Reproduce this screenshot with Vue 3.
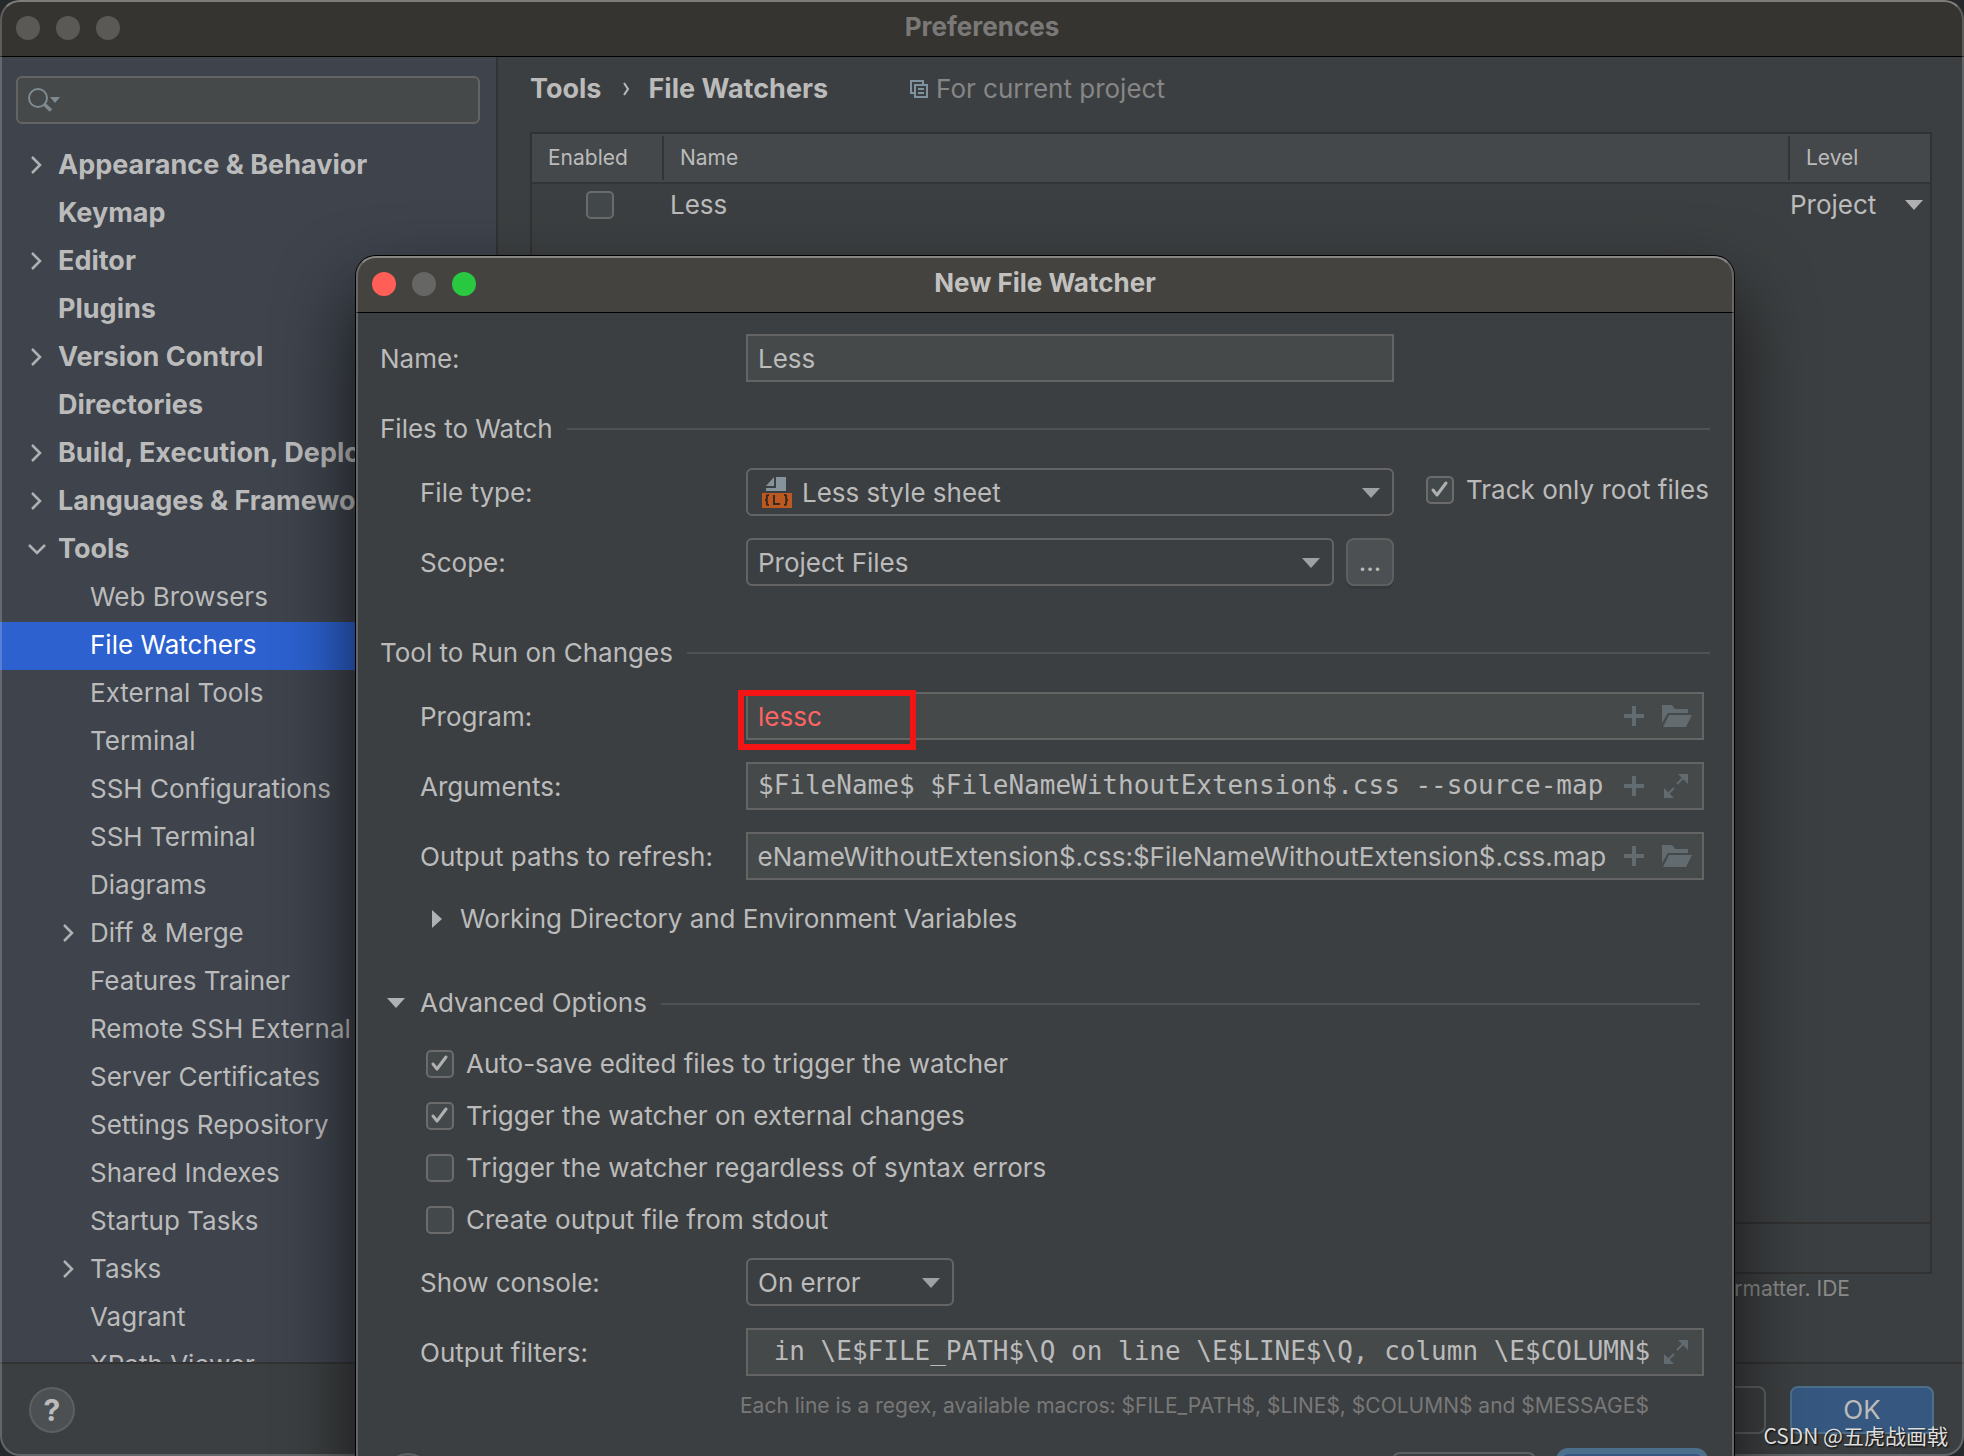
<script setup>
import { ref, onMounted } from 'vue'

const tree = [
  { label: 'Appearance & Behavior', top: true, arrow: 'right' },
  { label: 'Keymap', top: true },
  { label: 'Editor', top: true, arrow: 'right' },
  { label: 'Plugins', top: true },
  { label: 'Version Control', top: true, arrow: 'right' },
  { label: 'Directories', top: true },
  { label: 'Build, Execution, Deployment', top: true, arrow: 'right' },
  { label: 'Languages & Frameworks', top: true, arrow: 'right' },
  { label: 'Tools', top: true, arrow: 'down' },
  { label: 'Web Browsers' },
  { label: 'File Watchers', selected: true },
  { label: 'External Tools' },
  { label: 'Terminal' },
  { label: 'SSH Configurations' },
  { label: 'SSH Terminal' },
  { label: 'Diagrams' },
  { label: 'Diff & Merge', arrow: 'right' },
  { label: 'Features Trainer' },
  { label: 'Remote SSH External Tools' },
  { label: 'Server Certificates' },
  { label: 'Settings Repository' },
  { label: 'Shared Indexes' },
  { label: 'Startup Tasks' },
  { label: 'Tasks', arrow: 'right' },
  { label: 'Vagrant' },
  { label: 'XPath Viewer' },
]

const options = ref([
  { label: 'Auto-save edited files to trigger the watcher', on: true },
  { label: 'Trigger the watcher on external changes', on: true },
  { label: 'Trigger the watcher regardless of syntax errors', on: false },
  { label: 'Create output file from stdout', on: false },
])

const enabled = ref(false)
const trackRoot = ref(true)
const watcherName = ref('Less')
const program = ref('lessc')
const args = ref('$FileName$ $FileNameWithoutExtension$.css --source-map')
const outputPaths = ref('$FileNameWithoutExtension$.css:$FileNameWithoutExtension$.css.map')
const filters = ref(' in \\E$FILE_PATH$\\Q on line \\E$LINE$\\Q, column \\E$COLUMN$')

const pathsInput = ref(null)
onMounted(() => {
  // keep the end of the long path list in view
  pathsInput.value.scrollLeft = pathsInput.value.scrollWidth
})
</script>

<template>
  <div class="desktop">
    <div class="window">
      <header class="titlebar">
        <div class="lights"><i></i><i></i><i></i></div>
        <h1>Preferences</h1>
      </header>

      <div class="content">
        <aside class="sidebar">
          <label class="search">
            <svg width="36" height="28" viewBox="0 0 36 28" aria-hidden="true">
              <circle cx="12" cy="12" r="9" fill="none" stroke="#7f8b91" stroke-width="2" />
              <path d="M18 18l7 6.500" stroke="#7f8b91" stroke-width="3.500" />
              <path d="M24 11h10l-5 6z" fill="#7f8b91" />
            </svg>
            <input type="text" aria-label="Search settings" />
          </label>
          <ul class="tree">
            <li
              v-for="item in tree"
              :key="item.label"
              :class="{ top: item.top, child: !item.top, selected: item.selected }"
            >
              <span class="twist">
                <svg v-if="item.arrow === 'right'" width="20" height="20" viewBox="0 0 20 20">
                  <path d="M6 2l8 8-8 8" fill="none" stroke="#afb1b3" stroke-width="2.500" />
                </svg>
                <svg v-else-if="item.arrow === 'down'" width="20" height="20" viewBox="0 0 20 20">
                  <path d="M3 6l8 8 8-8" fill="none" stroke="#afb1b3" stroke-width="2.500" />
                </svg>
              </span>
              {{ item.label }}
            </li>
          </ul>
        </aside>

        <main class="page">
          <div class="crumbs">
            <strong>Tools</strong>
            <svg width="8" height="16" viewBox="0 0 8 16"><path d="M2 2l4 6-4 6" fill="none" stroke="#bbb" stroke-width="2" /></svg>
            <strong>File Watchers</strong>
            <span class="scope-note">
              <svg width="18" height="18" viewBox="0 0 18 18" fill="none" stroke="#7f939e" stroke-width="2">
                <path d="M4 13H1V1h12v3" />
                <path d="M5 5h12v12H5zM8 9h6M8 13h6" />
              </svg>
              For current project
            </span>
          </div>

          <div class="table-box">
            <table>
              <thead>
                <tr><th class="c-on"><span>Enabled</span></th><th><span>Name</span></th><th class="c-level"><span>Level</span></th></tr>
              </thead>
              <tbody>
                <tr>
                  <td class="on"><span class="check"><input v-model="enabled" type="checkbox" aria-label="Enable Less" /></span></td>
                  <td class="row-name">Less</td>
                  <td>
                    <span class="level">Project
                      <svg width="18" height="10" viewBox="0 0 18 10"><path d="M0 0h18L9 10z" fill="#afb1b3" /></svg>
                    </span>
                  </td>
                </tr>
              </tbody>
            </table>
            <div class="table-tools"></div>
          </div>
          <p class="page-note">formatter. IDE</p>
        </main>
      </div>

      <footer class="footer">
        <button class="help" type="button">?</button>
        <div class="actions">
          <button class="btn" type="button" aria-label="Cancel"></button>
          <button class="btn primary" type="button">OK</button>
        </div>
      </footer>
    </div>

    <section class="dialog" role="dialog" aria-labelledby="dlg-title">
      <header class="titlebar">
        <div class="lights active"><i></i><i></i><i></i></div>
        <h2 id="dlg-title">New File Watcher</h2>
      </header>

      <form class="form" @submit.prevent>
        <div class="row">
          <label for="f-name">Name:</label>
          <input id="f-name" v-model="watcherName" class="box wide" type="text" />
        </div>

        <div class="section"><span>Files to Watch</span><hr /></div>
        <div class="group">
          <div class="row">
            <label for="f-type">File type:</label>
            <div class="pick wide typed">
              <svg class="type-icon" width="30" height="32" viewBox="0 0 30 32" aria-hidden="true">
                <path d="M12 1v9H4z" fill="#87939a" />
                <path d="M14 1h10v14H4v-3h10z" fill="#87939a" />
                <path d="M0 17h30v15H0z" fill="#bd5821" />
                <path d="M7 19c-3 0-2 1-2 3s-1 2-2 2c1 0 2 0 2 2s-1 3 2 3M22 19c3 0 2 1 2 3s1 2 2 2c-1 0-2 0-2 2s1 3-2 3M12 19v9h6" fill="none" stroke="#3b2a20" stroke-width="2" />
              </svg>
              <select id="f-type"><option>Less style sheet</option></select>
              <svg class="arrow" width="18" height="10" viewBox="0 0 18 10"><path d="M0 0h18L9 10z" fill="#9da1a4" /></svg>
            </div>
            <label class="option track">
              <span class="check">
                <input v-model="trackRoot" type="checkbox" />
                <svg v-if="trackRoot" viewBox="0 0 28 28"><path d="M7 14l4 5 9-12" /></svg>
              </span>
              Track only root files
            </label>
          </div>
          <div class="row">
            <label for="f-scope">Scope:</label>
            <div class="wide split">
              <div class="pick">
                <select id="f-scope"><option>Project Files</option></select>
                <svg class="arrow" width="18" height="10" viewBox="0 0 18 10"><path d="M0 0h18L9 10z" fill="#9da1a4" /></svg>
              </div>
              <button class="more" type="button">...</button>
            </div>
          </div>
        </div>

        <div class="section late"><span>Tool to Run on Changes</span><hr /></div>
        <div class="group">
          <div class="row">
            <label for="f-program">Program:</label>
            <div class="box field">
              <input id="f-program" v-model="program" class="bad" type="text" />
              <svg width="20" height="20" viewBox="0 0 20 20"><path d="M8 0h4v8h8v4h-8v8H8v-8H0V8h8z" fill="#616b70" /></svg>
              <svg width="30" height="22" viewBox="0 0 30 22" fill="#616b70"><path d="M0 0h10l3 4h13v4H6L0 18z" /><path d="M7 10h23l-6 12H1z" /></svg>
              <div class="marker"></div>
            </div>
          </div>
          <div class="row">
            <label for="f-args">Arguments:</label>
            <div class="box field">
              <input id="f-args" v-model="args" class="mono" type="text" />
              <svg width="20" height="20" viewBox="0 0 20 20"><path d="M8 0h4v8h8v4h-8v8H8v-8H0V8h8z" fill="#616b70" /></svg>
              <svg width="30" height="24" viewBox="0 0 30 24" fill="#616b70"><path d="M16 0h10v10zM2 14l10 10H2z" /><path d="M15 10l7-7M6 20l6-6" stroke="#616b70" stroke-width="2" /></svg>
            </div>
          </div>
          <div class="row">
            <label for="f-paths">Output paths to refresh:</label>
            <div class="box field">
              <input id="f-paths" ref="pathsInput" v-model="outputPaths" type="text" />
              <svg width="20" height="20" viewBox="0 0 20 20"><path d="M8 0h4v8h8v4h-8v8H8v-8H0V8h8z" fill="#616b70" /></svg>
              <svg width="30" height="22" viewBox="0 0 30 22" fill="#616b70"><path d="M0 0h10l3 4h13v4H6L0 18z" /><path d="M7 10h23l-6 12H1z" /></svg>
            </div>
          </div>
        </div>

        <button class="fold inner" type="button">
          <svg width="20" height="18" viewBox="0 0 20 18"><path d="M6 0v18l10-9z" fill="#afb1b3" /></svg>
          Working Directory and Environment Variables
        </button>

        <div class="section advanced">
          <button class="fold" type="button">
            <svg width="20" height="18" viewBox="0 0 20 18"><path d="M1 4h18L10 14z" fill="#afb1b3" /></svg>
            Advanced Options
          </button>
          <hr />
        </div>

        <div class="options">
          <label v-for="o in options" :key="o.label" class="option">
            <span class="check">
              <input v-model="o.on" type="checkbox" />
              <svg v-if="o.on" viewBox="0 0 28 28"><path d="M7 14l4 5 9-12" /></svg>
            </span>
            {{ o.label }}
          </label>
        </div>

        <div class="group">
          <div class="row">
            <label for="f-console">Show console:</label>
            <div class="pick small">
              <select id="f-console"><option>On error</option></select>
              <svg class="arrow" width="18" height="10" viewBox="0 0 18 10"><path d="M0 0h18L9 10z" fill="#9da1a4" /></svg>
            </div>
          </div>
          <div class="row">
            <label for="f-filters">Output filters:</label>
            <div class="box field tight">
              <input id="f-filters" v-model="filters" class="mono" type="text" />
              <svg width="30" height="24" viewBox="0 0 30 24" fill="#616b70"><path d="M16 0h10v10zM2 14l10 10H2z" /><path d="M15 10l7-7M6 20l6-6" stroke="#616b70" stroke-width="2" /></svg>
            </div>
          </div>
        </div>
        <p class="hint">Each line is a regex, available macros: $FILE_PATH$, $LINE$, $COLUMN$ and $MESSAGE$</p>

        <div class="dialog-footer">
          <button class="help" type="button" aria-label="Help"></button>
          <div class="actions">
            <button class="btn" type="button" aria-label="Cancel"></button>
            <button class="btn primary focused" type="button" aria-label="OK"></button>
          </div>
        </div>
      </form>
    </section>

    <div class="credit">CSDN @五虎战画戟</div>
  </div>
</template>

<style>
body {
  background: #25292b;
}
</style>

<style scoped>
.desktop,
.desktop * {
  box-sizing: border-box;
}
.desktop {
  position: relative;
  height: 100vh;
  overflow: hidden;
  color: #bbbbbb;
  font: 26px/30px Inter, "Liberation Sans", sans-serif;
  font-optical-sizing: none;
  white-space: nowrap;
}
.desktop button,
.desktop input,
.desktop select {
  margin: 0;
  padding: 0;
  border: 0;
  outline: 0;
  background: none;
  color: inherit;
  font: inherit;
  font-optical-sizing: none;
  appearance: none;
}
svg {
  display: block;
  flex: none;
}

/* window frames */
.window {
  display: flex;
  flex-direction: column;
  height: 100%;
  border-radius: 20px;
  overflow: hidden;
  background: #3c3f41;
}
.window::after,
.dialog::after {
  content: "";
  position: absolute;
  inset: 0;
  border: 2px solid rgba(255, 255, 255, 0.2);
  border-top-color: rgba(255, 255, 255, 0.36);
  border-radius: 20px;
  pointer-events: none;
}
.titlebar {
  flex: none;
  display: grid;
  grid-template-columns: 1fr auto 1fr;
  align-items: center;
  height: 57px;
  padding: 0 16px;
  background: #353431;
  border-bottom: 1px solid #000;
}
.titlebar h1,
.titlebar h2 {
  margin: 0;
  padding-bottom: 2px;
  font-size: 26px;
  font-weight: 700;
  color: #7b7977;
}
.lights {
  display: flex;
  gap: 16px;
}
.lights i {
  width: 24px;
  height: 24px;
  border-radius: 50%;
  background: #5a5956;
}

/* preferences */
.content {
  flex: 1;
  min-height: 0;
  display: flex;
}
.sidebar {
  flex: none;
  display: flex;
  flex-direction: column;
  width: 498px;
  padding-top: 19px;
  background: #3e434c;
  border-right: 2px solid #323232;
  overflow: hidden;
}
.search {
  flex: none;
  display: flex;
  align-items: center;
  gap: 8px;
  height: 48px;
  margin: 0 16px 18px;
  padding-left: 12px;
  background: #45494a;
  border: 2px solid #646464;
  border-radius: 6px;
}
.search svg {
  margin-left: -4px;
}
.search input {
  flex: 1;
  min-width: 0;
}
.tree {
  margin: 0;
  padding: 0;
  list-style: none;
}
.tree li {
  display: flex;
  align-items: center;
  height: 48px;
  padding: 0 0 2px 26px;
}
.tree .top {
  font-size: 27px;
  font-weight: 700;
}
.tree .child {
  padding-left: 58px;
}
.tree .selected {
  background: #2c61cf;
  color: #fff;
}
.twist {
  flex: none;
  width: 32px;
}
.page {
  flex: 1;
  min-width: 0;
  display: flex;
  flex-direction: column;
  padding: 17px 32px 0;
}
.crumbs {
  display: flex;
  align-items: center;
  height: 30px;
}
.crumbs strong {
  font-size: 27px;
}
.crumbs > svg {
  margin: 0 18px 0 21px;
}
.scope-note {
  display: flex;
  align-items: center;
  gap: 8px;
  margin-left: 82px;
  color: #868686;
}
.table-box {
  flex: 1;
  display: flex;
  flex-direction: column;
  justify-content: space-between;
  margin-top: 28px;
  border: 2px solid #323232;
}
table {
  width: 100%;
  table-layout: fixed;
  border-collapse: collapse;
}
th {
  height: 49px;
  padding: 1px 0 2px;
  background: #44484a;
  border-bottom: 2px solid #323537;
  font-size: 21px;
  font-weight: 400;
  text-align: left;
}
th span {
  display: flex;
  align-items: center;
  height: 44px;
  padding-left: 16px;
  border-right: 2px solid #323537;
}
th:last-child span {
  border-right: 0;
}
.c-on {
  width: 132px;
}
.c-level {
  width: 140px;
}
td {
  height: 42px;
  padding: 0;
}
td.on {
  padding-left: 54px;
}
td.row-name {
  padding-left: 6px;
}
.level {
  display: flex;
  align-items: center;
  justify-content: space-between;
  padding-right: 7px;
}
.table-tools {
  height: 50px;
  border-top: 2px solid #323232;
}
.page-note {
  height: 88px;
  margin: 0;
  padding-right: 82px;
  color: #8a8a8a;
  font-size: 21px;
  text-align: right;
}
.footer {
  flex: none;
  display: flex;
  align-items: center;
  justify-content: space-between;
  height: 94px;
  padding: 0 30px 0 29px;
  border-top: 2px solid #323232;
}
.actions {
  display: flex;
  align-items: center;
  gap: 24px;
}
.desktop .help {
  width: 46px;
  height: 46px;
  border-radius: 50%;
  border: 2px solid #5e6060;
  background: #4c5052;
  font-size: 30px;
  font-weight: 700;
}
.desktop .btn {
  width: 144px;
  height: 48px;
  border: 2px solid #5e6060;
  border-radius: 8px;
  background: #3c3f41;
}
.desktop .btn.primary {
  background: #365880;
  border-color: #4c708c;
}

/* dialog */
.dialog {
  position: absolute;
  top: 256px;
  left: 356px;
  right: 230px;
  border-radius: 20px;
  background: #3c3f41;
  box-shadow: 0 0 0 1px #000, 0 36px 76px rgba(0, 0, 0, 0.7);
}
.dialog .titlebar {
  background: #444340;
  border-radius: 20px 20px 0 0;
}
.dialog h2 {
  color: #c2c1bf;
}
.active i {
  background: #666664;
}
.active i:first-child {
  background: #ff5f57;
}
.active i:last-child {
  background: #28c840;
}
.form {
  padding: 21px 24px 20px;
}
.row {
  display: flex;
  align-items: center;
  height: 48px;
}
.row > label:first-child {
  flex: none;
  width: 366px;
  padding-top: 2px;
}
.group {
  display: flex;
  flex-direction: column;
  gap: 22px;
  padding-left: 40px;
}
.group .row > label:first-child {
  width: 326px;
}
.box,
.desktop input.box {
  height: 48px;
  border: 2px solid #646464;
  background: #45494a;
}
.desktop input.box {
  padding: 0 10px;
}
.wide {
  flex: none;
  width: 648px;
}
.field {
  position: relative;
  flex: 1;
  min-width: 0;
  display: flex;
  align-items: center;
  gap: 18px;
  margin-right: 6px;
  padding: 0 10px;
}
.field.tight {
  gap: 10px;
}
.field input {
  flex: 1;
  min-width: 0;
  height: 40px;
}
.desktop .bad {
  color: #ff6464;
}
.desktop .mono {
  padding-bottom: 2px;
  font-family: "DejaVu Sans Mono", monospace;
  font-size: 26px;
}
.marker {
  position: absolute;
  top: -4px;
  left: -10px;
  width: 178px;
  height: 60px;
  border: 6px solid #f41414;
  pointer-events: none;
}
.section {
  display: flex;
  align-items: center;
  gap: 14px;
  height: 30px;
  margin: 32px 0 24px;
}
.section hr {
  flex: 1;
  margin: 0;
  border: 0;
  border-top: 2px solid #515151;
}
.section.late {
  margin-top: 52px;
}
.pick {
  position: relative;
  height: 48px;
}
.desktop .pick select {
  width: 100%;
  height: 48px;
  padding: 2px 44px 0 10px;
  border: 2px solid #646464;
  border-radius: 6px;
  background: #3c3f41;
}
.desktop .typed select {
  padding-left: 54px;
}
.type-icon {
  position: absolute;
  top: 8px;
  left: 16px;
}
.arrow {
  position: absolute;
  top: 20px;
  right: 14px;
  pointer-events: none;
}
.small {
  width: 208px;
}
.split {
  display: flex;
  gap: 12px;
}
.split .pick {
  flex: 1;
}
.desktop .more {
  width: 48px;
  height: 48px;
  border: 2px solid #5e6060;
  border-radius: 8px;
  background: #4c5052;
  box-shadow: 0 3px 0 #36393b;
}
.option {
  display: flex;
  align-items: center;
  gap: 12px;
  height: 28px;
}
.option.track {
  height: 32px;
  margin-left: 32px;
  padding-bottom: 4px;
}
.check {
  position: relative;
  display: block;
  flex: none;
  width: 28px;
  height: 28px;
}
.desktop .check input {
  display: block;
  width: 28px;
  height: 28px;
  border: 2px solid #6b6b6b;
  border-radius: 5px;
  background: #43494a;
}
.check svg {
  position: absolute;
  inset: 0;
  fill: none;
  stroke: #b0b0b0;
  stroke-width: 3;
  stroke-linecap: round;
  stroke-linejoin: round;
  pointer-events: none;
}
.options {
  display: flex;
  flex-direction: column;
  gap: 24px;
  margin: 31px 0 24px;
  padding-left: 46px;
}
.fold {
  display: flex;
  align-items: center;
  gap: 14px;
  height: 30px;
}
.desktop .inner {
  margin: 24px 0 0 46px;
}
.advanced .fold {
  padding-bottom: 2px;
}
.section.advanced {
  margin: 55px 10px 31px 6px;
}
.hint {
  margin: 15px 0 27px 360px;
  color: #787878;
  font-size: 21px;
}
.dialog-footer {
  display: flex;
  align-items: center;
  justify-content: space-between;
  padding: 0 2px 0 5px;
}
.dialog-footer .actions {
  gap: 20px;
}
.desktop .focused {
  width: 152px;
  height: 56px;
  border: 6px solid #43658c;
  border-radius: 12px;
}
.credit {
  position: absolute;
  right: 16px;
  bottom: 5px;
  color: #dedede;
  font: 21px/32px "Noto Sans CJK SC", sans-serif;
  text-shadow: 1px 1px 2px #000;
}
</style>
